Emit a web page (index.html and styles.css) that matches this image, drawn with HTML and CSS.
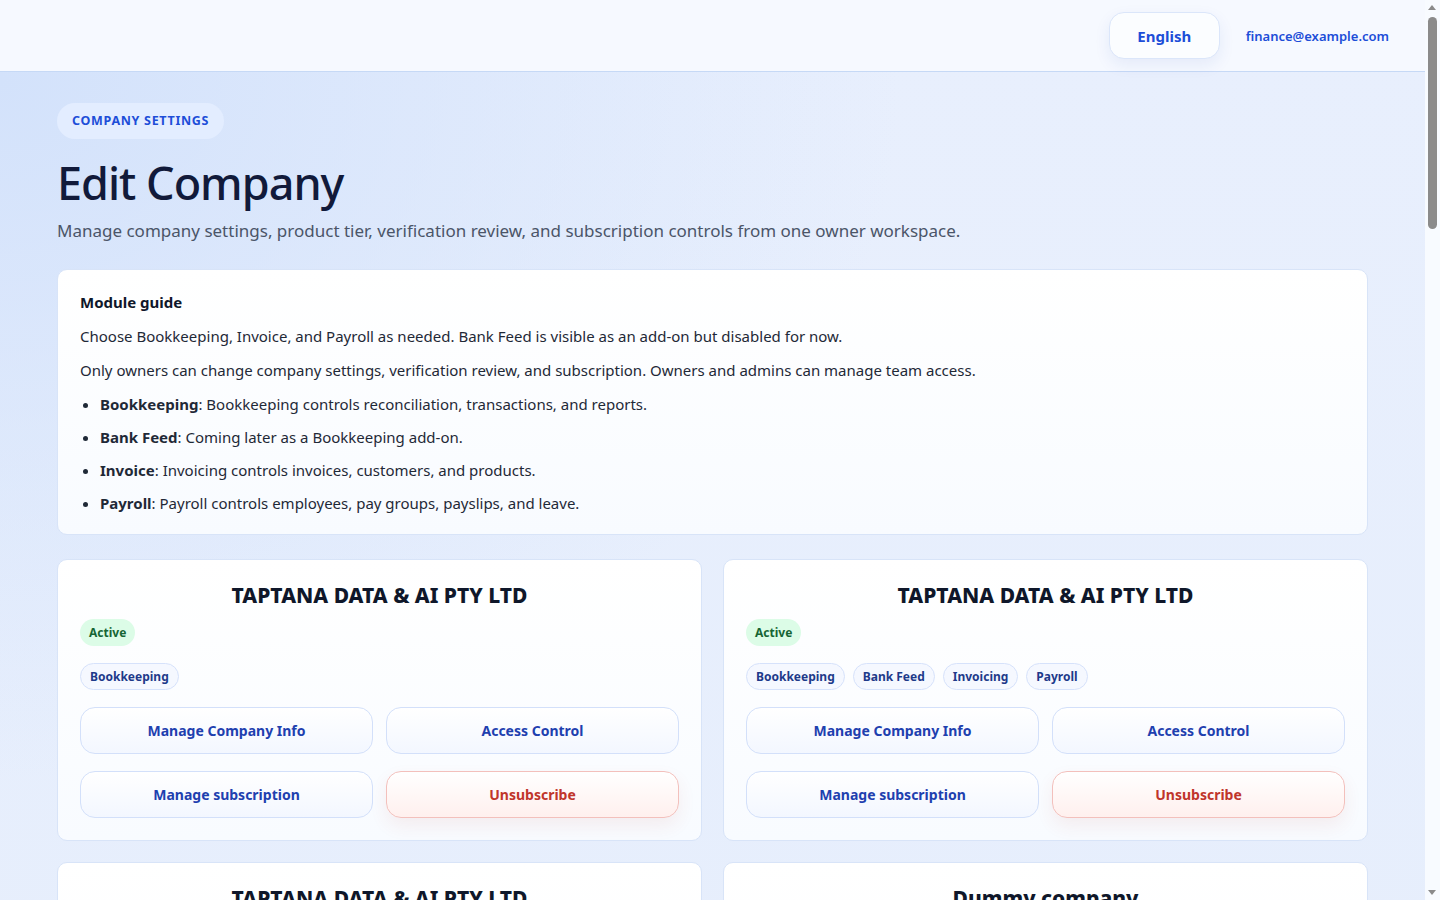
FILE: index.html
```html
<!DOCTYPE html>
<html lang="en">
<head>
<meta charset="UTF-8">
<meta name="viewport" content="width=device-width, initial-scale=1.0">
<title>Edit Company</title>
<link rel="stylesheet" href="styles.css">
</head>
<body>
<header class="topbar">
    <button class="lang-button">English</button>
    <span class="user-email">finance@example.com</span>
</header>

<main class="page">
    <span class="eyebrow">Company settings</span>
    <h1 class="page-title">Edit Company</h1>
    <p class="page-lead">Manage company settings, product tier, verification review, and subscription controls from one owner workspace.</p>

    <section class="guide">
        <h2 class="guide-title">Module guide</h2>
        <p>Choose Bookkeeping, Invoice, and Payroll as needed. Bank Feed is visible as an add-on but disabled for now.</p>
        <p>Only owners can change company settings, verification review, and subscription. Owners and admins can manage team access.</p>
        <ul>
            <li><strong>Bookkeeping</strong>: Bookkeeping controls reconciliation, transactions, and reports.</li>
            <li><strong>Bank Feed</strong>: Coming later as a Bookkeeping add-on.</li>
            <li><strong>Invoice</strong>: Invoicing controls invoices, customers, and products.</li>
            <li><strong>Payroll</strong>: Payroll controls employees, pay groups, payslips, and leave.</li>
        </ul>
    </section>

    <section class="company-grid">
        <div class="company-card">
            <h3 class="company-name">TAPTANA DATA &amp; AI PTY LTD</h3>
            <div class="row"><span class="status">Active</span></div>
            <div class="row">
                <span class="chip">Bookkeeping</span>
            </div>
            <div class="actions">
                <button class="action">Manage Company Info</button>
                <button class="action">Access Control</button>
                <button class="action">Manage subscription</button>
                <button class="action danger">Unsubscribe</button>
            </div>
        </div>

        <div class="company-card">
            <h3 class="company-name">TAPTANA DATA &amp; AI PTY LTD</h3>
            <div class="row"><span class="status">Active</span></div>
            <div class="row">
                <span class="chip">Bookkeeping</span>
                <span class="chip">Bank Feed</span>
                <span class="chip">Invoicing</span>
                <span class="chip">Payroll</span>
            </div>
            <div class="actions">
                <button class="action">Manage Company Info</button>
                <button class="action">Access Control</button>
                <button class="action">Manage subscription</button>
                <button class="action danger">Unsubscribe</button>
            </div>
        </div>

        <div class="company-card">
            <h3 class="company-name">TAPTANA DATA &amp; AI PTY LTD</h3>
            <div class="row"><span class="status">Active</span></div>
            <div class="row">
                <span class="chip">Bookkeeping</span>
                <span class="chip">Invoicing</span>
            </div>
            <div class="actions">
                <button class="action">Manage Company Info</button>
                <button class="action">Access Control</button>
                <button class="action">Manage subscription</button>
                <button class="action danger">Unsubscribe</button>
            </div>
        </div>

        <div class="company-card">
            <h3 class="company-name">Dummy company</h3>
            <div class="row"><span class="status">Active</span></div>
            <div class="row">
                <span class="chip">Bookkeeping</span>
            </div>
            <div class="actions">
                <button class="action">Manage Company Info</button>
                <button class="action">Access Control</button>
                <button class="action">Manage subscription</button>
                <button class="action danger">Unsubscribe</button>
            </div>
        </div>
    </section>
</main>

<!-- window scrollbar, drawn since the headless browser hides it -->
<div class="scrollbar" aria-hidden="true">
    <span class="scroll-arrow up"></span>
    <span class="scroll-thumb"></span>
    <span class="scroll-arrow down"></span>
</div>
</body>
</html>
```

FILE: styles.css
```css
html {
    background: #eef4fe;
}

body {
    margin: 0;
    font-family: "Noto Sans", "Open Sans", sans-serif;
    color: #111a33;
    background:
        radial-gradient(ellipse 900px 700px at 0 80px, #d3e2fb 0%, rgba(211, 226, 251, 0) 100%),
        linear-gradient(180deg, #e8effd 0%, #e6eefc 100%);
    min-height: 100vh;
}

.topbar {
    height: 72px;
    box-sizing: border-box;
    display: flex;
    align-items: center;
    justify-content: flex-end;
    gap: 26px;
    padding: 0 51px 0 0;
    background: #f6f9ff;
    border-bottom: 1px solid #c6d9f6;
}

.lang-button {
    width: 111px;
    height: 47px;
    border-radius: 15px;
    border: 1px solid #dbe6fa;
    background: #fbfdff;
    color: #1d4ed8;
    font-family: inherit;
    font-size: 15px;
    font-weight: 700;
    box-shadow: 0 6px 16px rgba(30, 64, 175, 0.08);
    cursor: pointer;
}

.user-email {
    color: #1d4ed8;
    font-size: 13px;
    font-weight: 600;
}

.page {
    padding: 31px 72px 40px 57px;
}

.eyebrow {
    display: inline-block;
    height: 36px;
    line-height: 36px;
    padding: 0 15px;
    border-radius: 18px;
    background: #e3edff;
    color: #1d4ed8;
    font-size: 12.5px;
    font-weight: 700;
    letter-spacing: 0.7px;
    text-transform: uppercase;
}

.page-title {
    margin: 14px 0 0;
    font-size: 45px;
    font-weight: 500;
    letter-spacing: -1px;
    line-height: 60px;
    color: #111a3a;
}

.page-lead {
    margin: 6px 0 0;
    font-size: 17px;
    color: #4b5568;
}

.guide {
    margin-top: 27px;
    padding: 22px 22px 9px;
    background: linear-gradient(180deg, #ffffff 0%, #f8fbff 100%);
    border: 1px solid #d8e4f8;
    border-radius: 10px;
    font-size: 15px;
    color: #1f2937;
}

.guide-title {
    margin: 0 0 13px;
    font-size: 15px;
    font-weight: 700;
    color: #0f172a;
}

.guide p {
    margin: 0 0 12px;
    line-height: 22px;
}

.guide ul {
    margin: 0;
    padding-left: 20px;
}

.guide li {
    line-height: 22px;
    margin-bottom: 11px;
}

.company-grid {
    margin-top: 24px;
    display: grid;
    grid-template-columns: 1fr 1fr;
    column-gap: 21px;
    row-gap: 21px;
}

.company-card {
    padding: 22px;
    background: linear-gradient(180deg, #ffffff 0%, #f8fbff 100%);
    border: 1px solid #d8e4f8;
    border-radius: 10px;
}

.company-name {
    margin: 0 0 11px;
    text-align: center;
    font-size: 21px;
    font-weight: 800;
    color: #0f172a;
    line-height: 26px;
}

.row {
    display: flex;
    gap: 8px;
    margin-bottom: 17px;
}

.status,
.chip {
    display: inline-block;
    height: 27px;
    line-height: 27px;
    padding: 0 9px;
    border-radius: 14px;
    font-size: 12px;
    font-weight: 700;
    box-sizing: border-box;
}

.status {
    background: #dcfce7;
    color: #166534;
}

.chip {
    line-height: 25px;
    border: 1px solid #d6e2fb;
    background: #f5f8ff;
    color: #1e3a8a;
}

.actions {
    display: grid;
    grid-template-columns: 1fr 1fr;
    column-gap: 13px;
    row-gap: 17px;
}

.action {
    height: 47px;
    border-radius: 15px;
    border: 1px solid #d3e0fa;
    background: linear-gradient(180deg, #ffffff 0%, #f3f7ff 100%);
    color: #1e40af;
    font-family: inherit;
    font-size: 14px;
    font-weight: 700;
    cursor: pointer;
}

.action.danger {
    border-color: #f3c0bc;
    background: linear-gradient(180deg, #ffffff 0%, #fff0ee 100%);
    color: #c0352b;
    box-shadow: 0 8px 18px rgba(190, 60, 50, 0.08);
}

.scrollbar {
    position: fixed;
    top: 0;
    right: 0;
    width: 15px;
    height: 100vh;
    background: #f8fbff;
}

.scroll-thumb {
    position: absolute;
    top: 17px;
    left: 3px;
    width: 9px;
    height: 212px;
    border-radius: 5px;
    background: #8b8b8b;
}

.scroll-arrow {
    position: absolute;
    left: 3px;
    width: 0;
    height: 0;
    border-left: 4.5px solid transparent;
    border-right: 4.5px solid transparent;
}

.scroll-arrow.up {
    top: 5px;
    border-bottom: 5px solid #8b8b8b;
}

.scroll-arrow.down {
    bottom: 5px;
    border-top: 5px solid #8b8b8b;
}
```
